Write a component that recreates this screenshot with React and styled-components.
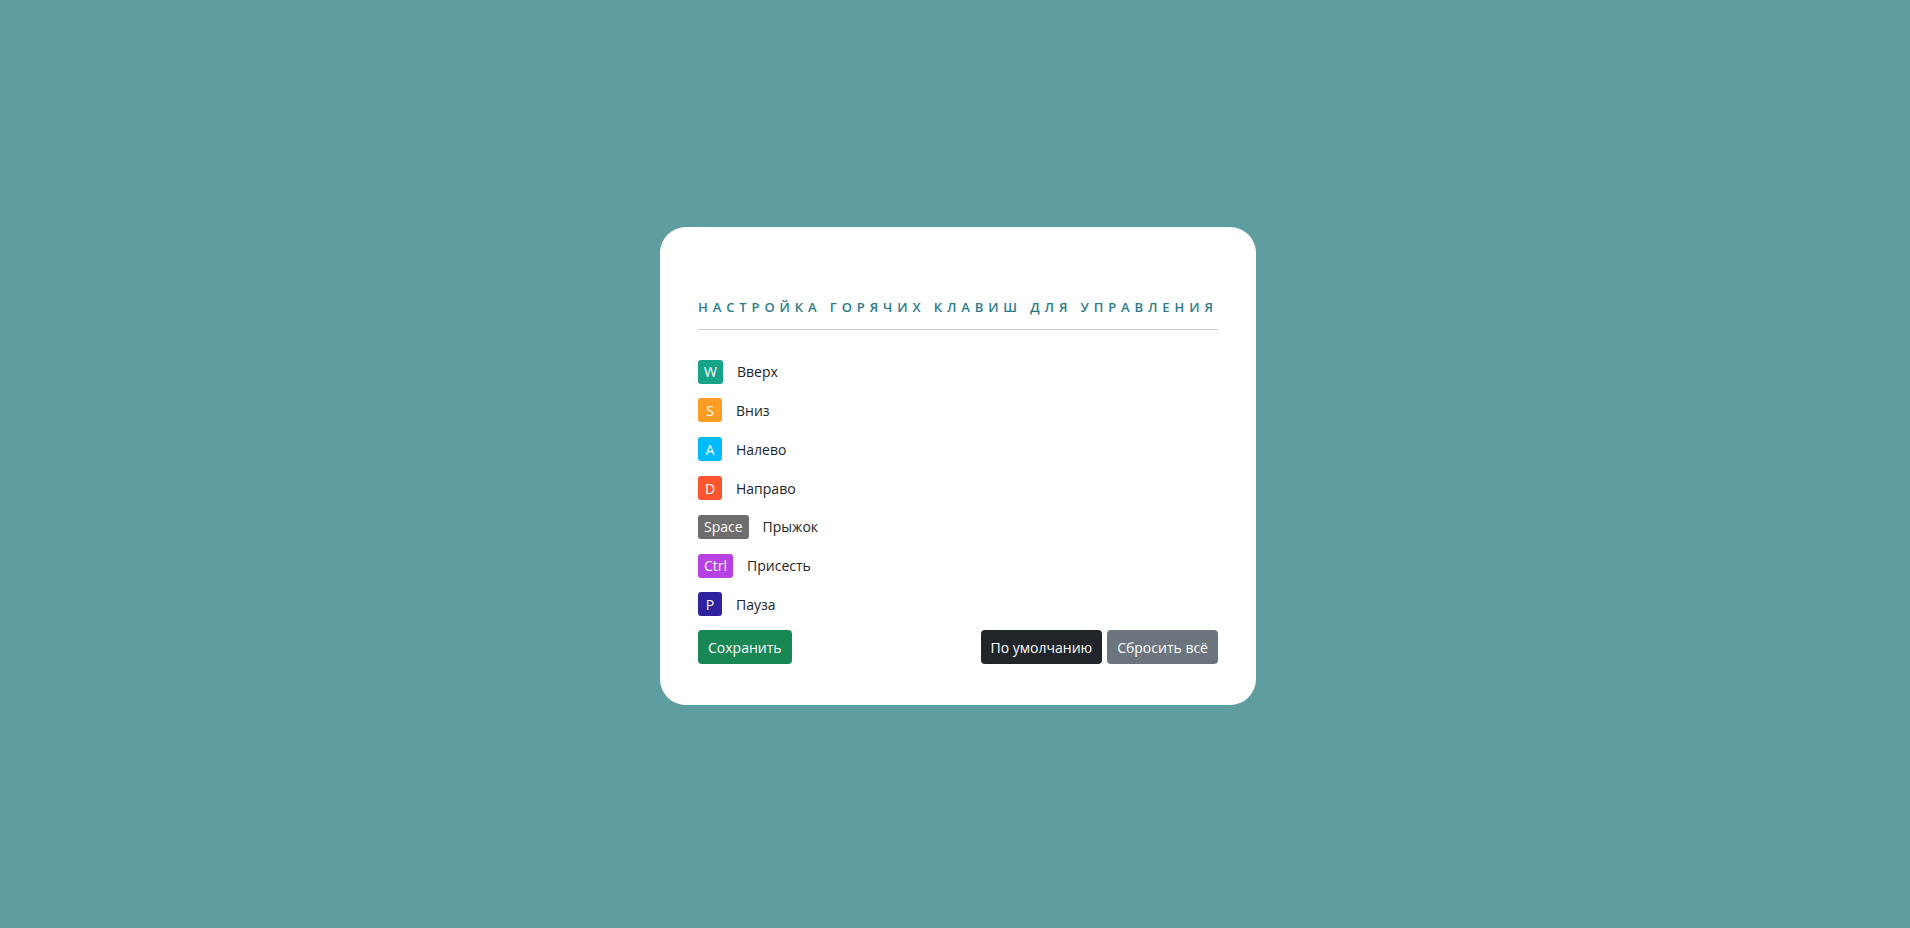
import React from "react";
import styled, { createGlobalStyle } from "styled-components";

const keys = [
  { key: "W", label: "Вверх", color: "#16a387" },
  { key: "S", label: "Вниз", color: "#ff9c23" },
  { key: "A", label: "Налево", color: "#00bcff" },
  { key: "D", label: "Направо", color: "#ff5630" },
  { key: "Space", label: "Прыжок", color: "#6d6d6d" },
  { key: "Ctrl", label: "Присесть", color: "#b841e6" },
  { key: "P", label: "Пауза", color: "#2f229e" },
];

const App = () => {
  return (
    <Page>
      <GlobalStyle />
      <Card>
        <Title>Настройка горячих клавиш для управления</Title>
        <Divider />
        <KeyList>
          {keys.map((k) => (
            <KeyRow key={k.key}>
              <KeyBadge $color={k.color}>{k.key}</KeyBadge>
              <KeyLabel>{k.label}</KeyLabel>
            </KeyRow>
          ))}
        </KeyList>
        <Actions>
          <Button $bg="#198754">Сохранить</Button>
          <ButtonGroup>
            <Button $bg="#212529">По умолчанию</Button>
            <Button $bg="#6c757d">Сбросить всё</Button>
          </ButtonGroup>
        </Actions>
      </Card>
    </Page>
  );
};

export default App;

// Styled-components

const GlobalStyle = createGlobalStyle`
  html, body {
    margin: 0;
    padding: 0;
    background: #5f9ea0;
    font-family: "Open Sans", "Noto Sans", sans-serif;
  }
`;

const Page = styled.div`
  min-height: 928px;
  display: flex;
  align-items: center;
  justify-content: center;
  padding-left: 6px;
  padding-top: 4px;
  box-sizing: border-box;
`;

const Card = styled.div`
  width: 596px;
  box-sizing: border-box;
  background: #fff;
  border-radius: 26px;
  padding: 71px 38px 41px;
  display: flex;
  flex-direction: column;
`;

const Title = styled.h2`
  margin: 0;
  font-size: 13px;
  font-weight: 600;
  line-height: 18px;
  letter-spacing: 4.9px;
  text-transform: uppercase;
  color: #2c7b88;
  white-space: nowrap;
`;

const Divider = styled.hr`
  margin: 13px 0 30px;
  border: none;
  border-top: 1px solid #cfcfcf;
  height: 0;
`;

const KeyList = styled.div`
  display: flex;
  flex-direction: column;
  gap: 14.8px;
`;

const KeyRow = styled.div`
  display: flex;
  align-items: center;
  gap: 14px;
  height: 24px;
`;

const KeyBadge = styled.span`
  display: inline-flex;
  align-items: center;
  justify-content: center;
  min-width: 24px;
  height: 24px;
  box-sizing: border-box;
  padding: 0 6px;
  border-radius: 3px;
  background: ${(p) => p.$color};
  color: #fff;
  font-size: 14px;
`;

const KeyLabel = styled.span`
  font-size: 14px;
  color: #212529;
`;

const Actions = styled.div`
  display: flex;
  justify-content: space-between;
  align-items: center;
  margin-top: 14px;
`;

const ButtonGroup = styled.div`
  display: flex;
  gap: 5px;
`;

const Button = styled.button`
  height: 34px;
  padding: 0 10px;
  border: none;
  border-radius: 4px;
  background: ${(p) => p.$bg};
  color: #fff;
  font-family: "Open Sans", "Noto Sans", sans-serif;
  font-size: 14px;
  cursor: pointer;
`;
